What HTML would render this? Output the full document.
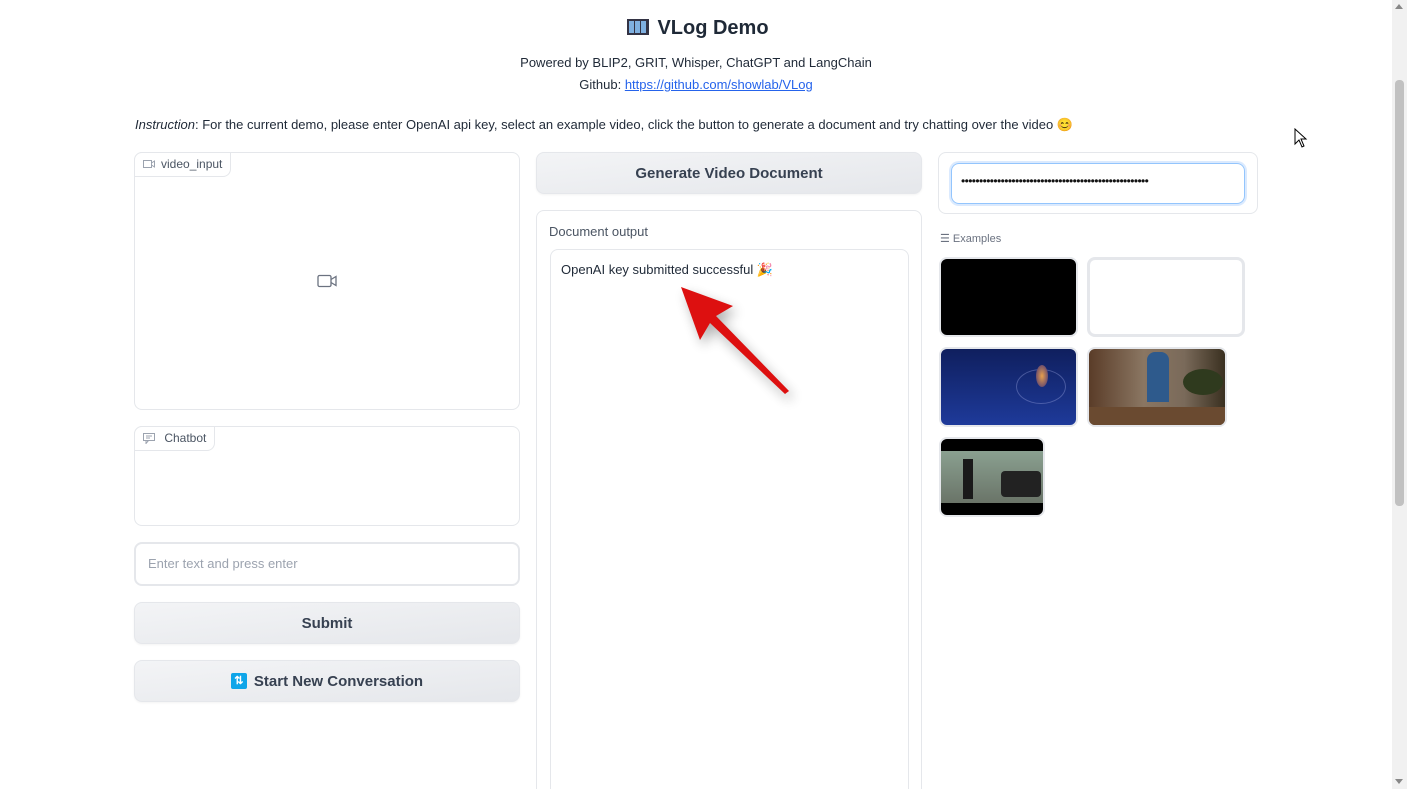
<!DOCTYPE html>
<html><head><meta charset="utf-8"><style>
*{box-sizing:border-box;margin:0;padding:0}
html,body{width:1407px;height:789px;overflow:hidden}
body{background:#fff;font-family:"Liberation Sans",sans-serif;color:#1f2937;position:relative}
.abs{position:absolute}
.box{position:absolute;border:1px solid #e5e7eb;border-radius:8px;background:#fff}
.btn{position:absolute;border:1px solid #e5e7eb;border-radius:8px;background:linear-gradient(to bottom right,#f3f4f6,#e5e7eb);font-weight:bold;font-size:15px;color:#374151;display:flex;align-items:center;justify-content:center;box-shadow:0 1px 2px rgba(0,0,0,.05)}
.lbl{position:absolute;left:-1px;top:-1px;border:1px solid #e5e7eb;border-radius:8px 0 8px 0;background:#fff;font-size:12px;color:#4b5563;padding:4px 8px 5px 8px;display:flex;align-items:center;gap:6px}
.thumb{position:absolute;border:2px solid #e5e7eb;border-radius:8px;overflow:hidden}
</style></head><body>
<div class="abs" style="left:0;top:17px;width:1396px;text-align:center;font-size:20px;font-weight:bold;color:#1f2937">
<span style="display:inline-block;width:22px;height:16px;border:2px solid #334;vertical-align:-1px;margin-right:8px;background:repeating-linear-gradient(90deg,#7fb0e0 0 5px,#334 5px 6px)"></span>VLog Demo</div>
<div class="abs" style="left:0;top:55px;width:1392px;text-align:center;font-size:13px;color:#1f2937">Powered by BLIP2, GRIT, Whisper, ChatGPT and LangChain</div>
<div class="abs" style="left:0;top:77px;width:1392px;text-align:center;font-size:13px;color:#1f2937">Github: <span style="color:#2563eb;text-decoration:underline">https://github.com/showlab/VLog</span></div>
<div class="abs" style="left:135px;top:117px;font-size:13px;color:#1f2937"><i>Instruction</i>: For the current demo, please enter OpenAI api key, select an example video, click the button to generate a document and try chatting over the video 😊</div>

<div class="box" style="left:134px;top:152px;width:386px;height:258px">
<div class="lbl"><svg width="12" height="10" viewBox="0 0 12 10"><rect x="0.5" y="1.5" width="8" height="7" fill="none" stroke="#9ca3af"/><path d="M8.5 4L11.5 2V8L8.5 6" fill="none" stroke="#9ca3af"/></svg>video_input</div>
<svg class="abs" style="left:182px;top:121px" width="20" height="14" viewBox="0 0 20 14"><rect x="1" y="1.5" width="13" height="11" rx="1.5" fill="none" stroke="#6b7280" stroke-width="1.3"/><path d="M14 5.5L19 2.5V11.5L14 8.5" fill="none" stroke="#6b7280" stroke-width="1.3"/></svg>
</div>
<div class="box" style="left:134px;top:426px;width:386px;height:100px">
<div class="lbl"><svg width="12" height="11" viewBox="0 0 12 11"><rect x="0.5" y="0.5" width="11" height="7" fill="none" stroke="#9ca3af"/><path d="M3 3h6M3 5h4M3 7.5V10.5L5.5 7.5" stroke="#9ca3af" fill="none"/></svg>&nbsp;Chatbot</div>
</div>
<div class="box" style="left:134px;top:542px;width:386px;height:44px;border:2px solid #e5e7eb;font-size:13px;color:#9ca3af;padding:12px 12px">Enter text and press enter</div>
<div class="btn" style="left:134px;top:602px;width:386px;height:42px">Submit</div>
<div class="btn" style="left:134px;top:660px;width:386px;height:42px"><span style="display:inline-block;width:16px;height:16px;background:#0ea5e9;border-radius:2px;color:#fff;font-size:11px;line-height:16px;text-align:center;margin-right:7px">⇅</span>Start New Conversation</div>

<div class="btn" style="left:536px;top:152px;width:386px;height:42px">Generate Video Document</div>
<div class="box" style="left:536px;top:210px;width:386px;height:600px;border-radius:8px">
<div class="abs" style="left:12px;top:13px;font-size:13px;color:#4b5563">Document output</div>
<div class="box" style="left:13px;top:38px;width:359px;height:560px;border:1px solid #e5e7eb;font-size:13px;color:#1f2937;padding:12px 10px">OpenAI key submitted successful 🎉</div>
</div>
<svg class="abs" style="left:640px;top:270px" width="170" height="140" viewBox="640 270 170 140">
<defs><filter id="s" x="-50%" y="-50%" width="200%" height="200%"><feGaussianBlur stdDeviation="6"/></filter></defs>
<path d="M681 287L733 306L716 316L789 391L785 394L710 323L700 340Z" fill="#000" opacity=".3" filter="url(#s)" transform="translate(4,6)"/>
<path d="M681 287L733 306L716 316L789 391L785 394L710 323L700 340Z" fill="#dd1010"/>
</svg>

<div class="box" style="left:938px;top:152px;width:320px;height:62px">
<div class="abs" style="left:12px;top:10px;width:294px;height:41px;border:1px solid #93c5fd;border-radius:8px;box-shadow:0 0 0 2px #dbeafe;font-size:12px;color:#111;padding:10px 9px;letter-spacing:-0.6px;overflow:hidden;white-space:nowrap">••••••••••••••••••••••••••••••••••••••••••••••••••••</div>
</div>
<div class="abs" style="left:940px;top:232px;font-size:11px;color:#6b7280">☰ Examples</div>
<div class="thumb" style="left:939px;top:257px;width:139px;height:80px;background:#000"></div>
<div class="thumb" style="left:1087px;top:257px;width:158px;height:80px;background:#fff;border-width:3px"></div>
<div class="thumb" style="left:939px;top:347px;width:139px;height:80px;background:linear-gradient(#0f1f5e,#1e3a9a)"><div class="abs" style="left:75px;top:20px;width:50px;height:35px;border:1px solid rgba(150,160,220,.4);border-radius:50%"></div><div class="abs" style="left:95px;top:16px;width:12px;height:22px;background:radial-gradient(#e8a04c,#40307a);border-radius:50%"></div></div>
<div class="thumb" style="left:1087px;top:347px;width:140px;height:80px;background:linear-gradient(90deg,#5a3c28,#8a7662 40%,#7a6a5a 70%,#3a3020)"><div class="abs" style="left:58px;top:3px;width:22px;height:50px;background:#2e5a8c;border-radius:8px 8px 0 0"></div><div class="abs" style="left:0;top:58px;width:140px;height:22px;background:#6a4a30"></div><div class="abs" style="left:94px;top:20px;width:40px;height:26px;background:#2f3a1e;border-radius:50%"></div></div>
<div class="thumb" style="left:939px;top:437px;width:106px;height:80px;background:#000"><div class="abs" style="left:0;top:12px;width:102px;height:52px;background:linear-gradient(#8aa090,#6a7468)"></div><div class="abs" style="left:60px;top:32px;width:40px;height:26px;background:#222;border-radius:4px"></div><div class="abs" style="left:22px;top:20px;width:10px;height:40px;background:#1a1a1a"></div></div>

<div class="abs" style="left:1392px;top:0;width:15px;height:789px;background:#f1f1f1"></div>
<div class="abs" style="left:1395px;top:80px;width:9px;height:426px;background:#c1c1c1;border-radius:4px"></div>
<div class="abs" style="left:1395px;top:4px;width:0;height:0;border:4px solid transparent;border-bottom:5px solid #888;border-top:0"></div>
<div class="abs" style="left:1395px;top:779px;width:0;height:0;border:4px solid transparent;border-top:5px solid #888;border-bottom:0"></div>
<svg class="abs" style="left:1294px;top:128px" width="14" height="20" viewBox="0 0 14 20"><path d="M1 1V16L5 12L8 19L10 18L7 11H12Z" fill="#fff" stroke="#000"/></svg>
</body></html>
